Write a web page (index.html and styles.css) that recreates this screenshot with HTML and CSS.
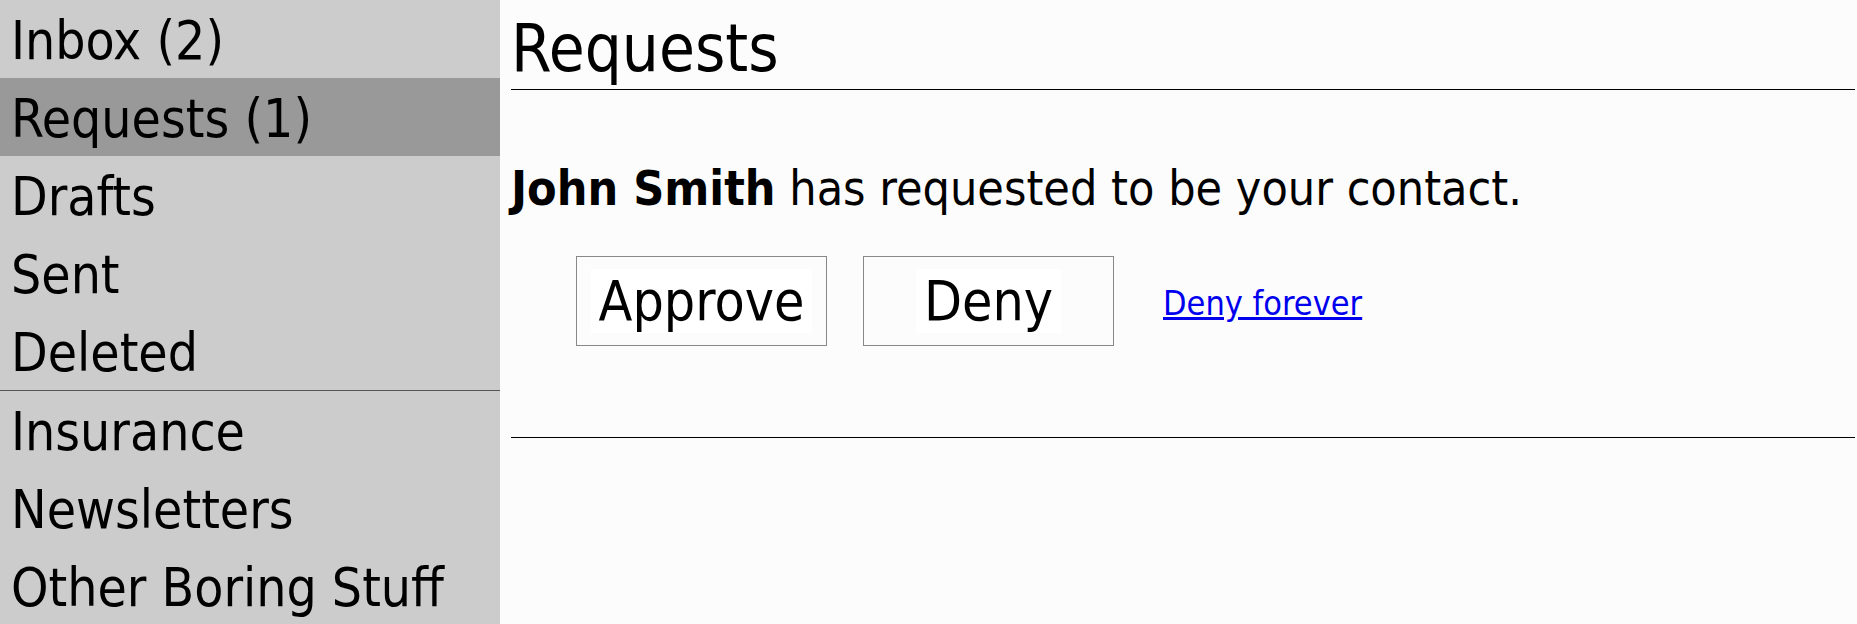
FILE: index.html
```html
<!DOCTYPE html>
<html>

<head>
    <meta charset="UTF-8">
    <title>Requests</title>
    <link rel="stylesheet" href="styles.css">
</head>

<body>
    <div class="sidebar">
        <a class="folder" href="#">Inbox (2)</a>
        <a class="folder active" href="#">Requests (1)</a>
        <a class="folder" href="#">Drafts</a>
        <a class="folder" href="#">Sent</a>
        <a class="folder" href="#">Deleted</a>
        <a class="folder custom" href="#">Insurance</a>
        <a class="folder" href="#">Newsletters</a>
        <a class="folder" href="#">Other Boring Stuff</a>
    </div>

    <div class="main">
        <h1 class="page-title">Requests</h1>

        <div class="request">
            <p class="request-text"><b>John Smith</b> has requested to be your contact.</p>
            <div class="request-actions">
                <button class="action"><span>Approve</span></button>
                <button class="action"><span>Deny</span></button>
                <a class="deny-forever" href="#">Deny forever</a>
            </div>
        </div>
    </div>
</body>

</html>
```

FILE: styles.css
```css
body {
    margin: 0;
    padding: 0;
    font-family: "DejaVu Sans Condensed", "DejaVu Sans", sans-serif;
    background: #fcfcfc;
    color: #000;
    height: 100vh;
    display: flex;
    overflow: hidden;
}

.sidebar {
    width: 500px;
    flex-shrink: 0;
    background: #cccccc;
    display: flex;
    flex-direction: column;
}

.folder {
    display: block;
    box-sizing: border-box;
    height: 78px;
    padding: 4px 0 0 11px;
    line-height: 74px;
    font-size: 53px;
    color: #000;
    text-decoration: none;
    white-space: nowrap;
    flex-shrink: 0;
}

.folder.active {
    background: #999999;
}

.folder.custom {
    height: 79px;
    border-top: 1px solid #555;
}

.main {
    flex: 1;
    padding: 0 2px 0 11px;
}

.page-title {
    margin: 0;
    padding: 12px 0 3px;
    font-size: 65px;
    font-weight: normal;
    line-height: 74px;
    border-bottom: 1px solid #000;
}

.request {
    padding-bottom: 91px;
    border-bottom: 1px solid #000;
}

.request-text {
    margin: 70px 0 0;
    font-size: 48px;
    line-height: 56px;
}

.request-actions {
    display: flex;
    align-items: center;
    gap: 36px;
    margin-top: 40px;
    padding-left: 65px;
}

.action {
    width: 251px;
    height: 90px;
    padding: 0;
    border: 1px solid #888;
    background: #fcfcfc;
    font-family: inherit;
    font-size: 55px;
    color: #000;
    display: flex;
    align-items: center;
    justify-content: center;
    cursor: pointer;
}

.action span {
    background: #fff;
    padding: 0 8px;
    line-height: 64px;
}

.deny-forever {
    margin: 4px 0 0 13px;
    font-size: 34px;
    color: #0000ee;
}
```
